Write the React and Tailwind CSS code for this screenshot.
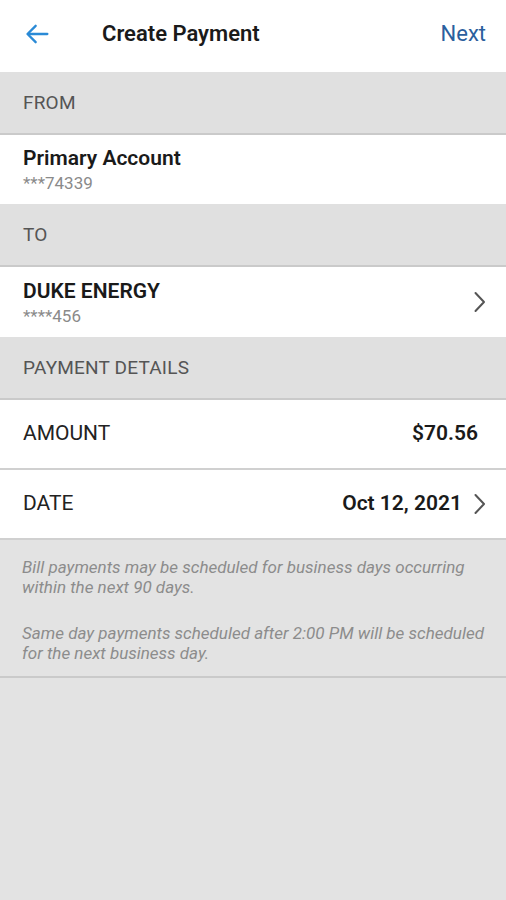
function Chevron() {
  return (
    <svg width="12" height="22" viewBox="0 0 12 22" fill="none" stroke="#555555" strokeWidth="2" strokeLinecap="round" strokeLinejoin="round">
      <path d="M1.5 2l8.5 9-8.5 9" />
    </svg>
  );
}

function SectionHeader({ label }) {
  return (
    <div className="h-[63px] flex items-center px-[23px] bg-[#e0e0e0] border-b-2 border-[#cacaca]">
      <span className="text-[19px] text-[#555555] tracking-[0.2px] pt-[2px]">{label}</span>
    </div>
  );
}

function AccountRow({ name, mask, chevron, tall }) {
  return (
    <div className={(tall ? 'h-[70px]' : 'h-[69px]') + ' flex items-center justify-between pl-[23px] pr-[20px] bg-white'}>
      <div className="flex flex-col">
        <span className="text-[21px] font-semibold text-[#1a1a1a] leading-[26px]">{name}</span>
        <span className="text-[17px] text-[#8a8a8a] leading-[22px] mt-[1px]">{mask}</span>
      </div>
      {chevron && <Chevron />}
    </div>
  );
}

function DetailRow({ label, value, chevron }) {
  return (
    <div className="h-[70px] flex items-center justify-between pl-[23px] pr-[20px] bg-white border-b-2 border-[#d0d0d0]">
      <span className="text-[21px] text-[#222222]">{label}</span>
      <div className="flex items-center gap-[12px]">
        <span className={'text-[21px] font-semibold text-[#1a1a1a]' + (chevron ? '' : ' pr-[8px]')}>{value}</span>
        {chevron && <Chevron />}
      </div>
    </div>
  );
}

export default function App() {
  return (
    <div className="w-[506px] h-[900px] bg-[#e3e3e3] flex flex-col" style={{ fontFamily: 'Roboto, "Noto Sans", sans-serif' }}>
      <div className="h-[72px] bg-white flex items-center pl-[24px] pr-[20px] pb-[5px]">
        <svg width="28" height="28" viewBox="0 0 24 24" fill="none" stroke="#2a8ad6" strokeWidth="2" strokeLinecap="round" strokeLinejoin="round">
          <path d="M20 12H4" />
          <path d="M10 5l-7 7 7 7" />
        </svg>
        <span className="ml-[50px] text-[22px] font-semibold text-[#1a1a1a]">Create Payment</span>
        <span className="ml-auto text-[22px] text-[#2b5f9e]">Next</span>
      </div>

      <SectionHeader label="FROM" />
      <AccountRow name="Primary Account" mask="***74339" />
      <SectionHeader label="TO" />
      <AccountRow name="DUKE ENERGY" mask="****456" chevron tall />
      <SectionHeader label="PAYMENT DETAILS" />
      <DetailRow label="AMOUNT" value="$70.56" />
      <DetailRow label="DATE" value="Oct 12, 2021" chevron />

      <div className="px-[22px] pt-[17px] pb-[13px] border-b-2 border-[#cacaca] text-[17px] italic text-[#8c8c8c] leading-[20px]">
        <p>Bill payments may be scheduled for business days occurring within the next 90 days.</p>
        <p className="mt-[26px]">Same day payments scheduled after 2:00 PM will be scheduled for the next business day.</p>
      </div>
    </div>
  );
}
